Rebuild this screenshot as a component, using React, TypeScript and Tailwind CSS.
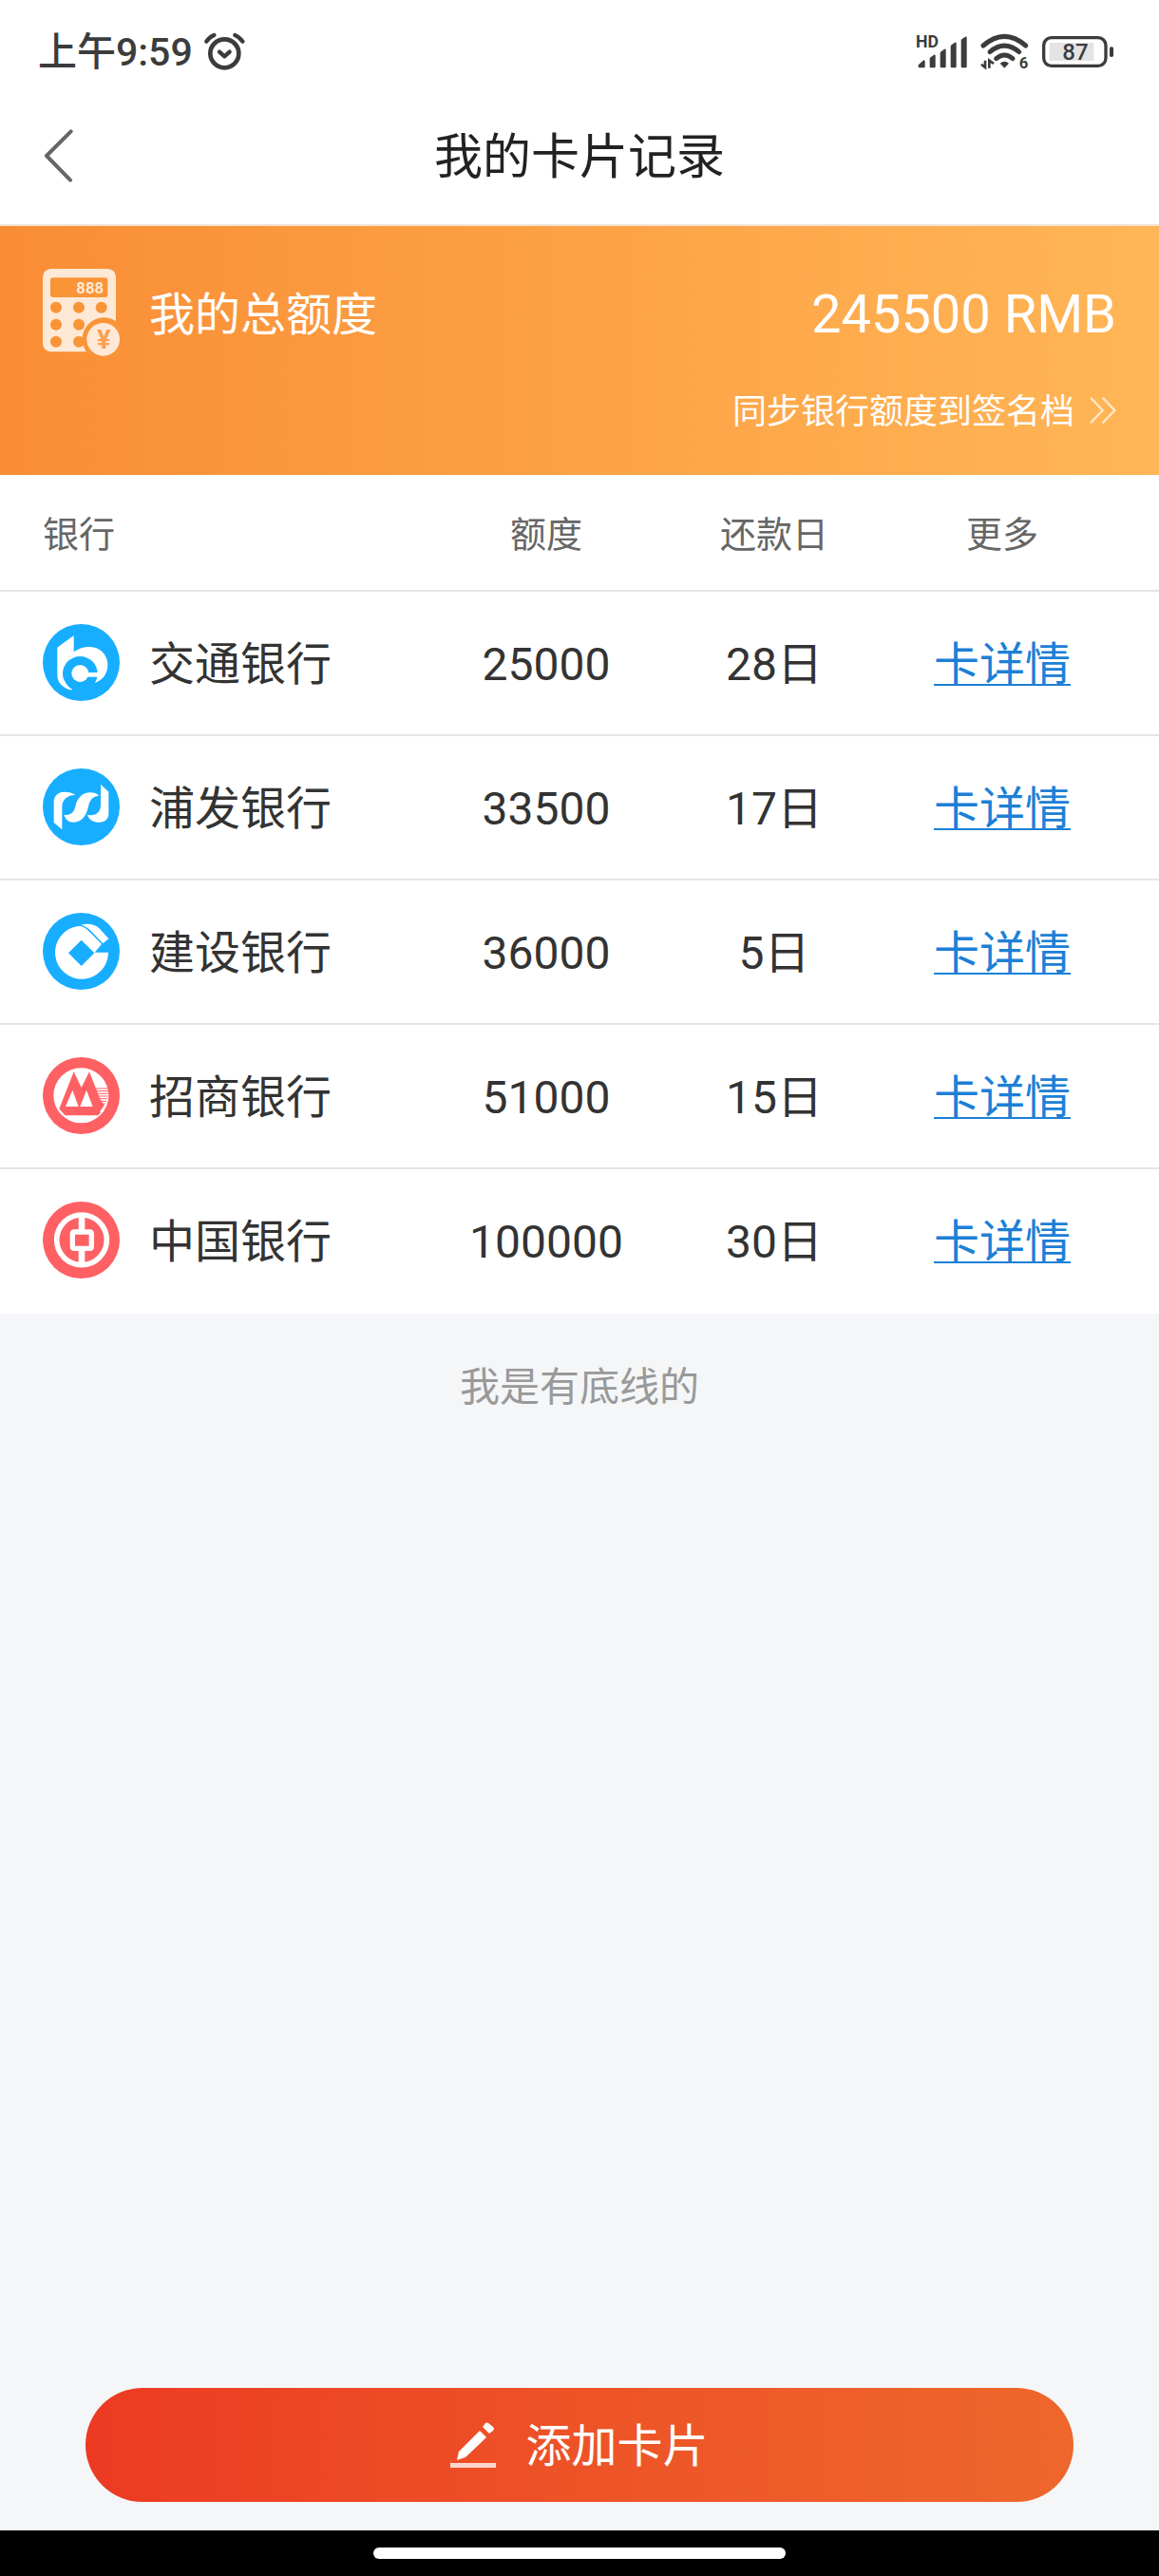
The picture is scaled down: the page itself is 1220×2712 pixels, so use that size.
import { ReactNode } from "react";

interface BankCard {
  id: number;
  name: string;
  limit: number;
  dueDay: number;
  logo: ReactNode;
}

const BLUE = "#18aeff";
const RED = "#ff6064";

function BocomLogo() {
  return (
    <svg viewBox="0 0 243 243" className="w-[81px] h-[81px] shrink-0" aria-hidden="true">
      <circle cx="121.5" cy="121.5" r="121.5" fill={BLUE} />
      <path
        d="M46 74L98 36V88C112 77 130 72 149 72C181 72 205 97 205 128C205 156 190 176 166 185L118 157L93 208C64 203 46 186 46 162Z"
        fill="#fff"
      />
      <circle cx="118" cy="157" r="55" fill={BLUE} />
      <path d="M93 208C78 208 60 196 52 182L68 178C74 192 84 202 93 208Z" fill="#fff" />
      <circle cx="118" cy="156" r="27" fill="#fff" />
      <path d="M118 153H175V167H118Z" fill="#fff" />
    </svg>
  );
}

function SpdbLogo() {
  return (
    <svg viewBox="0 0 243 243" className="w-[81px] h-[81px] shrink-0" aria-hidden="true">
      <circle cx="121.5" cy="121.5" r="121.5" fill={BLUE} />
      <g fill="#fff">
        <path d="M35 171V108C35 86 48 74 68 74C82 74 94 77 103 84C78 84 61 98 61 122V193Z" />
        <path d="M67 146C86 150 99 140 103 120C108 94 126 76 150 76C162 76 171 79 178 87C160 86 149 98 144 120C138 150 124 168 99 170C83 171 71 161 67 146Z" />
        <path d="M141 146C164 152 183 140 183 116V50L208 74V142C208 160 197 170 179 170C159 170 146 162 141 146Z" />
      </g>
    </svg>
  );
}

function CcbLogo() {
  return (
    <svg viewBox="0 0 243 243" className="w-[81px] h-[81px] shrink-0" aria-hidden="true">
      <circle cx="121.5" cy="121.5" r="121.5" fill={BLUE} />
      <path d="M207 125A84 84 0 1 1 112 42C128 42 138 50 150 62L186 99L164 125Z" fill="#fff" />
      <path d="M122 86L163 127L122 168L81 127Z" fill={BLUE} />
      <path d="M120 39C140 32 164 35 180 50L208 82L190 97L157 62C145 49 134 41 120 39Z" fill="#fff" />
    </svg>
  );
}

function CmbLogo() {
  return (
    <svg viewBox="0 0 243 243" className="w-[81px] h-[81px] shrink-0" aria-hidden="true">
      <circle cx="121.5" cy="121.5" r="121.5" fill={RED} />
      <circle cx="121" cy="121" r="87" fill="#fff" />
      <path d="M98 46L122 96L147 46L182 134L198 157L175 184H70L52 163Z" fill={RED} />
      <path d="M94 104L113 156H72ZM138 104L158 156H118Z" fill="#fff" />
      <path
        d="M167 99H207M170 107H207M173 115H207M176 123H206M179 131H204M182 139H201M187 147H198"
        stroke={RED}
        strokeWidth="3"
      />
      <path d="M182 174L197 153" stroke="#fff" strokeWidth="5" />
    </svg>
  );
}

function BocLogo() {
  return (
    <svg viewBox="0 0 243 243" className="w-[81px] h-[81px] shrink-0" aria-hidden="true">
      <circle cx="121.5" cy="121.5" r="121.5" fill={RED} />
      <g fill="none" stroke="#fff">
        <circle cx="123" cy="121" r="79" strokeWidth="17" />
        <rect x="94" y="96" width="60" height="52" rx="5" strokeWidth="16" />
        <path d="M123 42V90M123 154V200" strokeWidth="20" />
      </g>
    </svg>
  );
}

function CalculatorIcon() {
  return (
    <svg viewBox="0 0 243 276" className="w-[81px] h-[92px] shrink-0" aria-hidden="true">
      <rect width="231" height="262" rx="26" fill="#fee9d6" />
      <rect x="24" y="28" width="181" height="62" rx="8" fill="#f99437" />
      <text x="106" y="78" fontSize="50" fontWeight="700" fontFamily="Roboto, sans-serif" fill="#fee9d6">
        888
      </text>
      <g fill="#f99437">
        {[122, 176, 230].map((cy) =>
          [42, 114, 185].map((cx) => <circle key={`${cx}-${cy}`} cx={cx} cy={cy} r="18" />)
        )}
        {/* gap around the coin */}
        <circle cx="193" cy="222" r="68" />
      </g>
      <circle cx="191" cy="223" r="52" fill="#fee9d6" />
      <text
        x="193"
        y="251"
        textAnchor="middle"
        fontSize="82"
        fontWeight="700"
        fontFamily="Roboto, sans-serif"
        fill="#f9a055"
      >
        ¥
      </text>
    </svg>
  );
}

function StatusBar() {
  return (
    <div className="flex h-[92px] items-center justify-between pt-4 pr-[47px] pl-[40px] text-[#3c3c3c]">
      <div className="flex items-center gap-3">
        <span className="pt-0.5 text-[41px] leading-[48px] font-medium">上午9:59</span>
        <svg viewBox="0 0 129 120" className="w-[43px] h-[40px]" fill="none" stroke="currentColor" aria-hidden="true">
          <circle cx="64" cy="67" r="45" strokeWidth="14" />
          <path d="M48 62L64 76L80 62" strokeWidth="13" strokeLinecap="round" strokeLinejoin="round" />
          <path d="M7 29Q16 15 31 9M121 29Q112 15 97 9" strokeWidth="13" strokeLinecap="round" />
        </svg>
      </div>
      <div className="flex items-center gap-[14px]">
        <svg viewBox="0 -15 162 135" className="w-[54px] h-[45px]" fill="currentColor" aria-hidden="true">
          <text x="0" y="38" fontSize="53" fontWeight="700" fontFamily="Roboto, sans-serif">
            HD
          </text>
          <g stroke="currentColor" strokeWidth="6" strokeLinejoin="round">
            <path d="M11 95L26 82V100H11ZM47 74L59 65V100H47ZM80 56L92 47V100H80ZM113 35L125 26V100H113ZM146 16L158 8V100H146Z" />
          </g>
        </svg>
        <svg viewBox="0 -15 153 144" className="w-[51px] h-[48px]" fill="none" stroke="currentColor" aria-hidden="true">
          <path d="M9 39Q76 -19 143 39" strokeWidth="15" strokeLinecap="round" />
          <path d="M30 59Q76 20 122 59" strokeWidth="15" strokeLinecap="round" />
          <path d="M50 80Q76 58 102 80" strokeWidth="15" strokeLinecap="round" />
          <path d="M62 95Q76 84 90 95L76 110Z" fill="currentColor" stroke="none" />
          <path d="M15 86V108L3 98M28 110V86L42 96" strokeWidth="8" />
          <text x="122" y="111" fontSize="50" fontWeight="700" fontFamily="Roboto, sans-serif" fill="currentColor" stroke="none">
            6
          </text>
        </svg>
        <svg viewBox="0 0 228 99" className="w-[76px] h-[33px]" aria-hidden="true">
          <rect x="23" y="21" width="140" height="57" fill="#e4e4e4" />
          <rect x="5" y="5" width="196" height="89" rx="24" fill="none" stroke="currentColor" strokeWidth="10" />
          <rect x="213" y="34" width="12" height="32" rx="5" fill="currentColor" />
          <text
            x="105"
            y="76"
            textAnchor="middle"
            fontSize="72"
            fontWeight="500"
            fontFamily="Roboto, sans-serif"
            fill="currentColor"
          >
            87
          </text>
        </svg>
      </div>
    </div>
  );
}

const cards: BankCard[] = [
  { id: 1, name: "交通银行", limit: 25000, dueDay: 28, logo: <BocomLogo /> },
  { id: 2, name: "浦发银行", limit: 33500, dueDay: 17, logo: <SpdbLogo /> },
  { id: 3, name: "建设银行", limit: 36000, dueDay: 5, logo: <CcbLogo /> },
  { id: 4, name: "招商银行", limit: 51000, dueDay: 15, logo: <CmbLogo /> },
  { id: 5, name: "中国银行", limit: 100000, dueDay: 30, logo: <BocLogo /> },
];

export default function App() {
  const total = cards.reduce((sum, card) => sum + card.limit, 0);

  return (
    <div className="flex min-h-screen flex-col bg-[#f4f6f8] font-['Roboto','Noto_Sans_CJK_SC',sans-serif] text-[#333333]">
      <div className="border-b-2 border-[#f3e3d3] bg-white">
        <StatusBar />
        {/* Title bar */}
        <header className="grid h-[144px] grid-cols-[120px_1fr_120px] items-center">
          <button type="button" aria-label="返回" className="flex h-full items-center pl-[46px]">
            <svg viewBox="0 0 96 168" className="w-8 h-14" fill="none" stroke="#666" strokeWidth="12" strokeLinecap="round" strokeLinejoin="round">
              <path d="M86 7L9 84L84 161" />
            </svg>
          </button>
          <h1 className="pt-1 text-center text-[51px] leading-[60px] text-[#222222]">我的卡片记录</h1>
        </header>
      </div>

      {/* Total limit */}
      <section className="flex h-[262px] flex-col bg-linear-to-r from-[#f98d35] to-[#ffb656] px-[45px] pt-[45px] text-white">
        <div className="flex items-center justify-between">
          <div className="flex items-center gap-[31px]">
            <CalculatorIcon />
            <span className="pt-1.5 text-[48px] leading-[60px]">我的总额度</span>
          </div>
          <span className="pt-1 text-[56px] leading-[60px]">{total} RMB</span>
        </div>
        <a href="#sync" className="mt-[33px] flex items-center justify-end gap-4 text-[36px] leading-[44px]">
          <span className="pt-1">同步银行额度到签名档</span>
          <svg viewBox="0 0 84 84" className="w-7 h-7" fill="none" stroke="#ffe9c8" strokeWidth="7" aria-hidden="true">
            <path d="M3 2L41 42L3 82M41 2L79 42L41 82" />
          </svg>
        </a>
      </section>

      {/* Cards */}
      <table className="w-full table-fixed border-collapse bg-white text-center">
        <thead>
          <tr className="h-[122px] border-b-2 border-[#e5e5e5] text-[38px] leading-[48px] text-[#666666]">
            <th className="pt-1 pl-[45px] text-left font-normal">银行</th>
            <th className="w-[240px] pt-1 font-normal">额度</th>
            <th className="w-[240px] pt-1 font-normal">还款日</th>
            <th className="w-[285px] pt-1 pr-[45px] font-normal">更多</th>
          </tr>
        </thead>
        <tbody className="text-[48px] leading-[60px]">
          {cards.map((card) => (
            <tr key={card.id} className="h-[152px] border-b-2 border-[#e5e5e5] last:border-white">
              <td className="pb-0.5 pl-[45px]">
                <div className="flex items-center gap-[31px]">
                  {card.logo}
                  <span className="pt-1.5">{card.name}</span>
                </div>
              </td>
              <td className="pt-1">{card.limit}</td>
              <td className="pt-1">{card.dueDay}日</td>
              <td className="pt-1 pr-[45px]">
                <a
                  href={`#card-${card.id}`}
                  className="text-[#1c80d6] underline decoration-2 underline-offset-4 [text-decoration-skip-ink:none]"
                >
                  卡详情
                </a>
              </td>
            </tr>
          ))}
        </tbody>
      </table>

      <p className="py-12 text-center text-[42px] leading-[60px] text-[#999999]">我是有底线的</p>

      {/* Add card */}
      <div className="mt-auto px-[90px] pb-[30px]">
        <button
          type="button"
          className="flex h-[120px] w-full items-center justify-center gap-[31px] rounded-full bg-linear-to-r from-[#ec3a22] to-[#ee672c] text-[48px] leading-[60px] text-white"
        >
          <svg viewBox="0 0 48 48" className="w-12 h-12" aria-hidden="true">
            <path d="M31 9L38 16L16 37L7 40L9 31Z" fill="#fff" />
            <path d="M34 5L37 1Q38 0 40 1L45 5Q47 7 45 9L41 12Z" fill="#fff" />
            <rect y="43" width="48" height="5" fill="#fcd6cc" />
          </svg>
          <span className="pt-1">添加卡片</span>
        </button>
      </div>

      {/* Gesture bar */}
      <div className="flex h-12 items-center justify-center bg-black">
        <div className="h-3 w-[434px] rounded-full bg-white" />
      </div>
    </div>
  );
}
